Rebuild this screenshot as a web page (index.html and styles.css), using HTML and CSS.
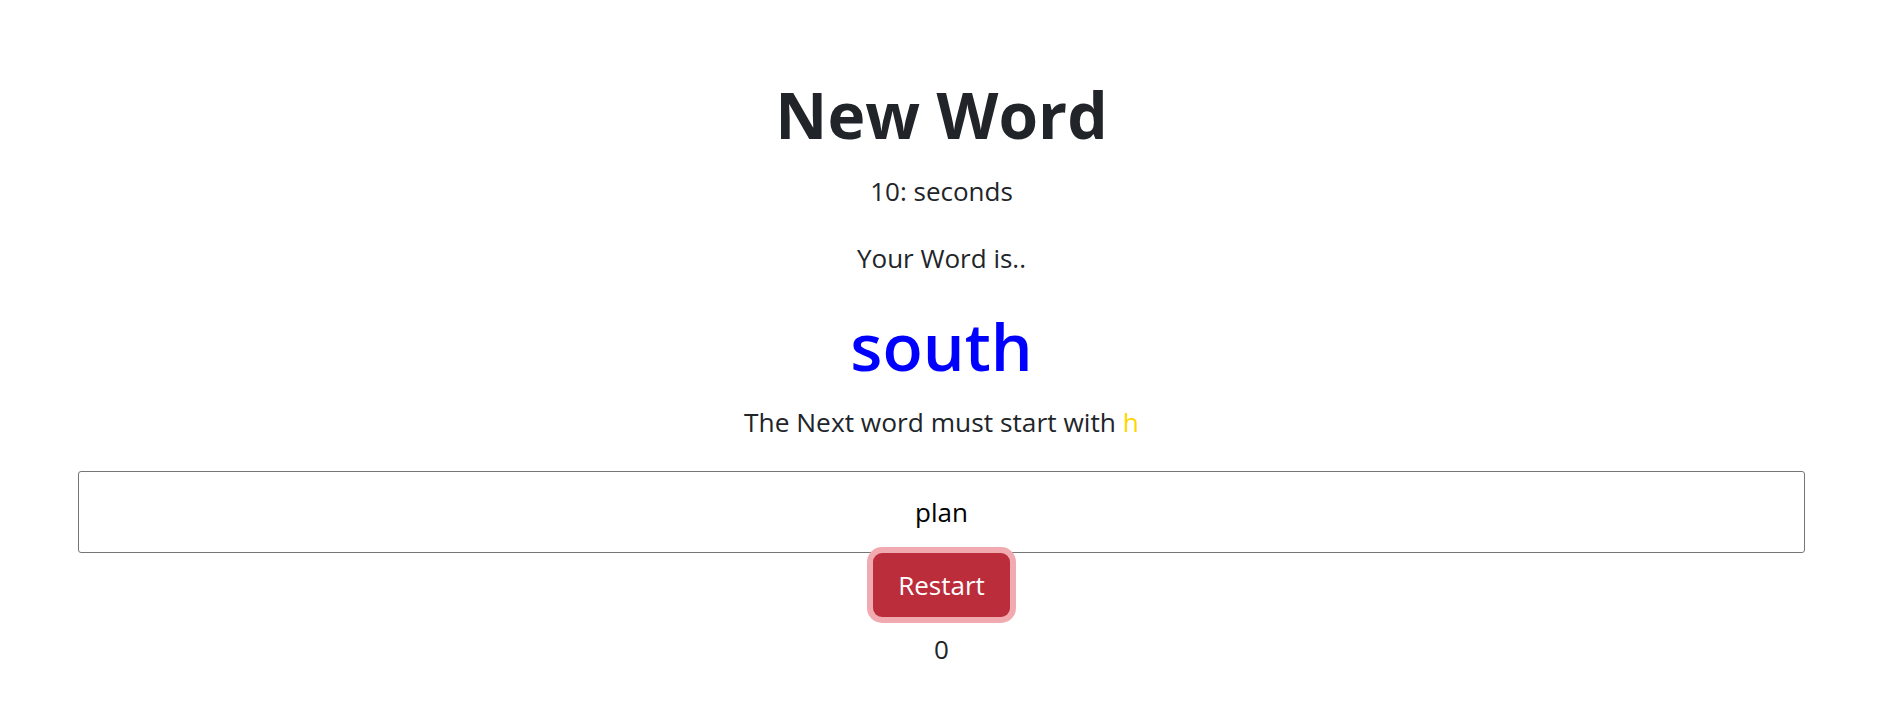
FILE: index.html
```html
<!DOCTYPE html>
<html lang="en">
<head>
<meta charset="utf-8">
<title>New Word</title>
<link rel="stylesheet" href="styles.css">
</head>
<body>
<main class="game">
  <h1 class="title">New Word</h1>
  <p class="timer">10: seconds</p>
  <p class="label">Your Word is..</p>
  <h2 class="word">south</h2>
  <p class="hint">The Next word must start with <span class="letter">h</span></p>
  <input class="answer" type="text" value="plan">
  <button class="restart" type="button">Restart</button>
  <p class="score">0</p>
</main>
</body>
</html>
```

FILE: styles.css
```css
html, body {
  margin: 0;
  padding: 0;
  background: #ffffff;
}

body {
  font-family: "Open Sans", "Noto Sans", sans-serif;
  color: #212529;
}

.game {
  display: flex;
  flex-direction: column;
  align-items: center;
  padding: 73px 76px 40px 78px;
  text-align: center;
}

.title {
  margin: 0;
  font-size: 64px;
  font-weight: 700;
  line-height: 84px;
}

.timer,
.label,
.hint,
.score {
  margin: 0;
  font-size: 26px;
  line-height: 40px;
}

.timer {
  margin-top: 14px;
}

.label {
  margin-top: 27px;
}

.word {
  margin: 24px 0 0;
  font-size: 66px;
  font-weight: 600;
  line-height: 86px;
  color: #0000ff;
}

.hint {
  margin-top: 14px;
  font-size: 26.3px;
}

.letter {
  color: #ffd700;
}

.answer {
  box-sizing: border-box;
  align-self: stretch;
  margin: 29px 0 0;
  height: 82px;
  padding: 0 12px;
  border: 1px solid #767676;
  border-radius: 3px;
  font-family: "Open Sans", "Noto Sans", sans-serif;
  font-size: 26px;
  color: #000000;
  text-align: center;
  background: #ffffff;
}

.restart {
  margin: 0;
  width: 137px;
  height: 64px;
  border: none;
  border-radius: 9px;
  background: #bb2d3b;
  color: #ffffff;
  font-family: "Open Sans", "Noto Sans", sans-serif;
  font-size: 26px;
  box-shadow: 0 0 0 6px #f1aab0;
  cursor: pointer;
}

.score {
  margin-top: 12px;
}
```
